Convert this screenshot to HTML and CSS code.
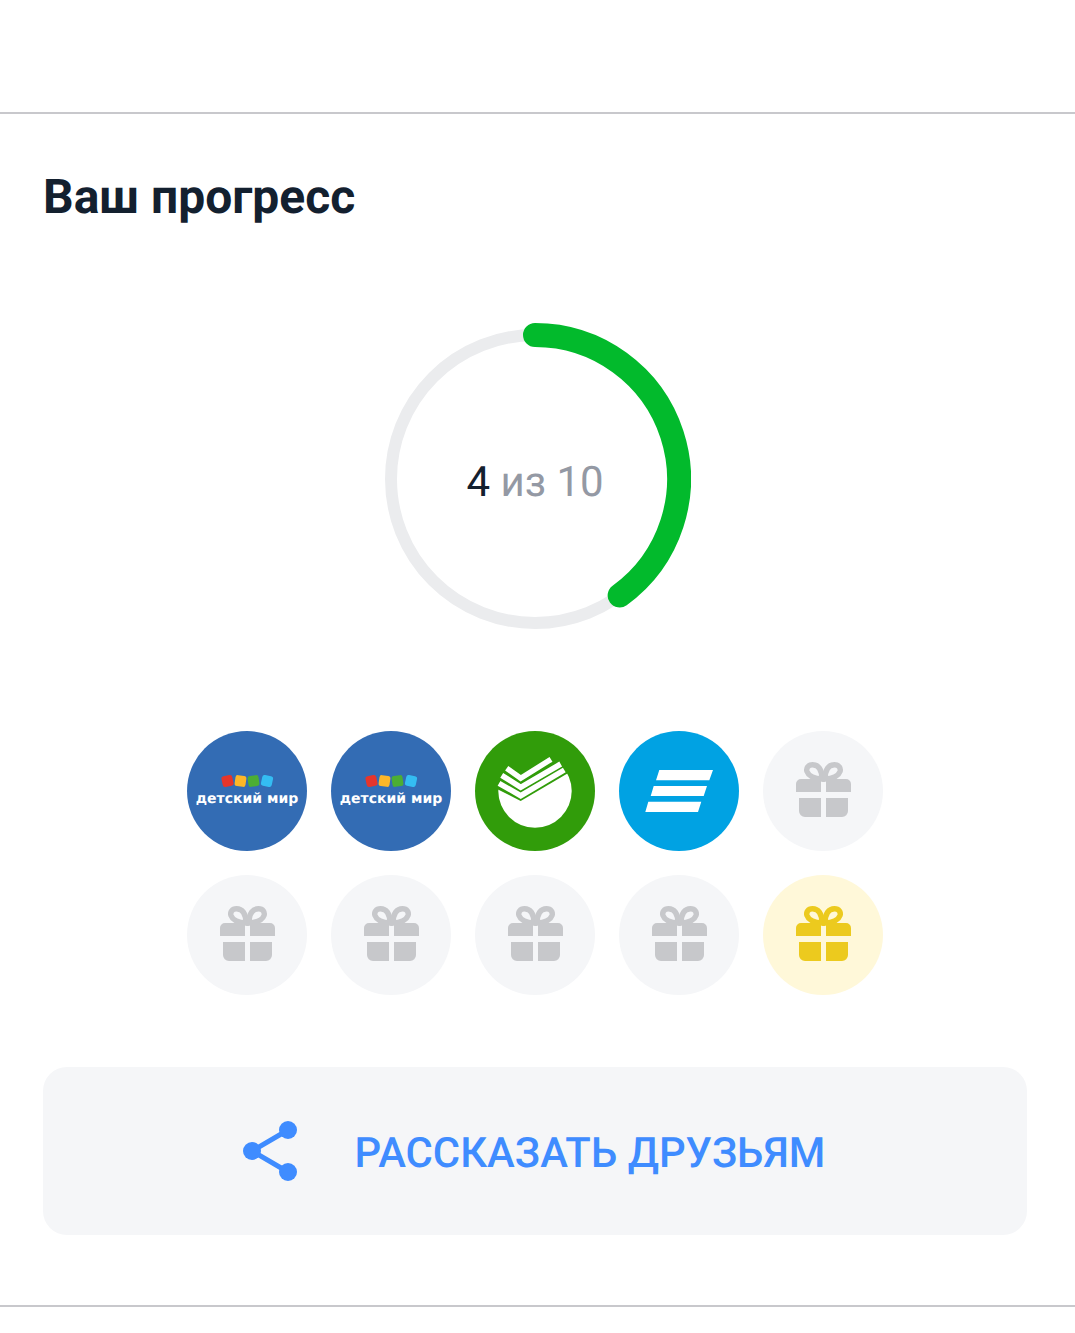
FILE: index.html
```html
<!DOCTYPE html>
<html lang="en">
<head>
    <meta charset="UTF-8">
    <title>Ваш прогресс</title>
    <link rel="stylesheet" href="styles.css">
</head>
<body>
    <svg class="defs" width="0" height="0">
        <symbol id="gift" viewBox="0 0 120 120">
            <path class="gift-bow" d="M59 48C59 38 55 33.700 49.500 33.700C45 33.700 43 37 44 40.500C45.500 45 52 47.500 59 48Z"/>
            <path class="gift-bow" d="M62 48C62 38 66 33.700 71.500 33.700C76 33.700 78 37 77 40.500C75.500 45 69 47.500 62 48Z"/>
            <path d="M58 48H38a5 5 0 0 0-5 5v8h25zM63 48h20a5 5 0 0 1 5 5v8H63zM36 67h22v19H42a6 6 0 0 1-6-6zM63 67h22v13a6 6 0 0 1-6 6H63z"/>
        </symbol>
    </svg>

    <div class="top-bar"></div>

    <section class="progress">
        <h1 class="title">Ваш прогресс</h1>

        <div class="ring">
            <svg class="ring-svg" width="312" height="312" viewBox="0 0 312 312">
                <circle class="ring-track" cx="156" cy="156" r="144"/>
                <path class="ring-value" d="M156 12A144 144 0 0 1 240.640 272.500"/>
            </svg>
            <div class="ring-label"><span class="ring-count">4</span> из 10</div>
        </div>

        <div class="steps">
            <div class="step step-dm">
                <svg viewBox="0 0 120 120" width="120" height="120">
                    <rect x="35" y="44.500" width="11" height="11" rx="2.500" fill="#e5352b" transform="rotate(-12 40.500 50)"/>
                    <rect x="48" y="44.500" width="11" height="11" rx="2.500" fill="#fdb728" transform="rotate(8 53.500 50)"/>
                    <rect x="61" y="44.500" width="11" height="11" rx="2.500" fill="#4cae34" transform="rotate(-8 66.500 50)"/>
                    <rect x="74.500" y="44.500" width="11" height="11" rx="2.500" fill="#34bdf2" transform="rotate(12 80 50)"/>
                    <text class="dm-text" x="60" y="72" text-anchor="middle">детский мир</text>
                </svg>
            </div>
            <div class="step step-dm">
                <svg viewBox="0 0 120 120" width="120" height="120">
                    <rect x="35" y="44.500" width="11" height="11" rx="2.500" fill="#e5352b" transform="rotate(-12 40.500 50)"/>
                    <rect x="48" y="44.500" width="11" height="11" rx="2.500" fill="#fdb728" transform="rotate(8 53.500 50)"/>
                    <rect x="61" y="44.500" width="11" height="11" rx="2.500" fill="#4cae34" transform="rotate(-8 66.500 50)"/>
                    <rect x="74.500" y="44.500" width="11" height="11" rx="2.500" fill="#34bdf2" transform="rotate(12 80 50)"/>
                    <text class="dm-text" x="60" y="72" text-anchor="middle">детский мир</text>
                </svg>
            </div>
            <div class="step step-sber">
                <svg viewBox="0 0 120 120" width="120" height="120">
                    <circle cx="60" cy="60" r="36.700" fill="#fff"/>
                    <path d="M20 57L45.700 70L95 41V18H20Z" fill="#319c0a"/>
                    <polyline class="sber-line" points="24,52.300 45.700,64.700 89.300,39"/>
                    <polyline class="sber-line" points="26.700,44.300 45.700,56.300 85.700,33"/>
                    <polyline class="sber-line" points="31.700,37.300 45.700,47.300 76,28.300"/>
                </svg>
            </div>
            <div class="step step-bank">
                <svg viewBox="0 0 120 120" width="120" height="120">
                    <path fill="#fff" d="M40.300 39H94L90.300 49.300H37ZM34.700 55H88L84.700 65H31.700ZM29.300 70.700H82.300L79 81H26.300Z"/>
                </svg>
            </div>
            <div class="step step-gift"><svg width="120" height="120"><use href="#gift"/></svg></div>
            <div class="step step-gift"><svg width="120" height="120"><use href="#gift"/></svg></div>
            <div class="step step-gift"><svg width="120" height="120"><use href="#gift"/></svg></div>
            <div class="step step-gift"><svg width="120" height="120"><use href="#gift"/></svg></div>
            <div class="step step-gift"><svg width="120" height="120"><use href="#gift"/></svg></div>
            <div class="step step-gift step-prize"><svg width="120" height="120"><use href="#gift"/></svg></div>
        </div>

        <button class="share" type="button">
            <svg class="share-icon" width="56" height="60" viewBox="0 0 56 60">
                <path d="M46 9L10 30L46 51" fill="none" stroke="#3f8cff" stroke-width="5"/>
                <circle cx="46" cy="9" r="9"/>
                <circle cx="10" cy="30" r="9"/>
                <circle cx="46" cy="51" r="9"/>
            </svg>
            <span class="share-text">РАССКАЗАТЬ ДРУЗЬЯМ</span>
        </button>
    </section>
</body>
</html>
```

FILE: styles.css
```css
body, html {
    margin: 0;
    padding: 0;
    background: #fff;
    color: #13202f;
    font-family: "Roboto", sans-serif;
    text-rendering: geometricPrecision;
}

.defs {
    display: block;
    height: 0;
}

.top-bar {
    height: 112px;
    border-bottom: 2px solid #c8c8cc;
}

.progress {
    height: 1191px;
    padding: 0 48px 0 43px;
    border-bottom: 2px solid #c8c8cc;
}

.title {
    margin: 0;
    padding-top: 53px;
    font-size: 48px;
    line-height: 60px;
    font-weight: 700;
}

.ring {
    display: grid;
    justify-content: center;
    align-items: center;
    margin-top: 96px;
}

.ring-svg, .ring-label {
    grid-area: 1 / 1;
}

.ring-svg {
    display: block;
}

.ring-track {
    fill: none;
    stroke: #ebecee;
    stroke-width: 12;
}

.ring-value {
    fill: none;
    stroke: #02ba2c;
    stroke-width: 24;
    stroke-linecap: round;
}

.ring-label {
    padding-top: 6px;
    text-align: center;
    font-size: 42px;
    color: #9499a4;
}

.ring-count {
    color: #13202f;
}

.steps {
    display: grid;
    grid-template-columns: repeat(5, 120px);
    gap: 24px;
    justify-content: center;
    margin-top: 96px;
}

.step {
    width: 120px;
    height: 120px;
    border-radius: 50%;
    overflow: hidden;
}

.step svg {
    display: block;
}

.step-dm {
    background: #336cb4;
}

.dm-text {
    fill: #fff;
    font-family: "DejaVu Sans", sans-serif;
    font-size: 14px;
    font-weight: 700;
}

.step-sber {
    background: #319c0a;
}

.sber-line {
    fill: none;
    stroke: #fff;
    stroke-width: 5.500;
}

.step-bank {
    background: #00a2e3;
}

.step-gift {
    background: #f5f6f8;
    fill: #c7c8cb;
    stroke: #c7c8cb;
    stroke-width: 0;
}

.step-prize {
    background: #fff8d9;
    fill: #ecca1e;
    stroke: #ecca1e;
}

.gift-bow {
    fill: none;
    stroke-width: 5.500;
}

.share {
    display: flex;
    align-items: center;
    justify-content: center;
    gap: 57px;
    width: 100%;
    height: 168px;
    margin-top: 72px;
    padding: 0 3px 0 0;
    border: 0;
    border-radius: 24px;
    background: #f5f6f8;
    color: #3f8cff;
    font-family: inherit;
    font-size: 41.800px;
    font-weight: 500;
    text-rendering: geometricPrecision;
}

.share-text {
    padding-top: 5px;
}

.share-icon {
    display: block;
    fill: #3f8cff;
}
```
